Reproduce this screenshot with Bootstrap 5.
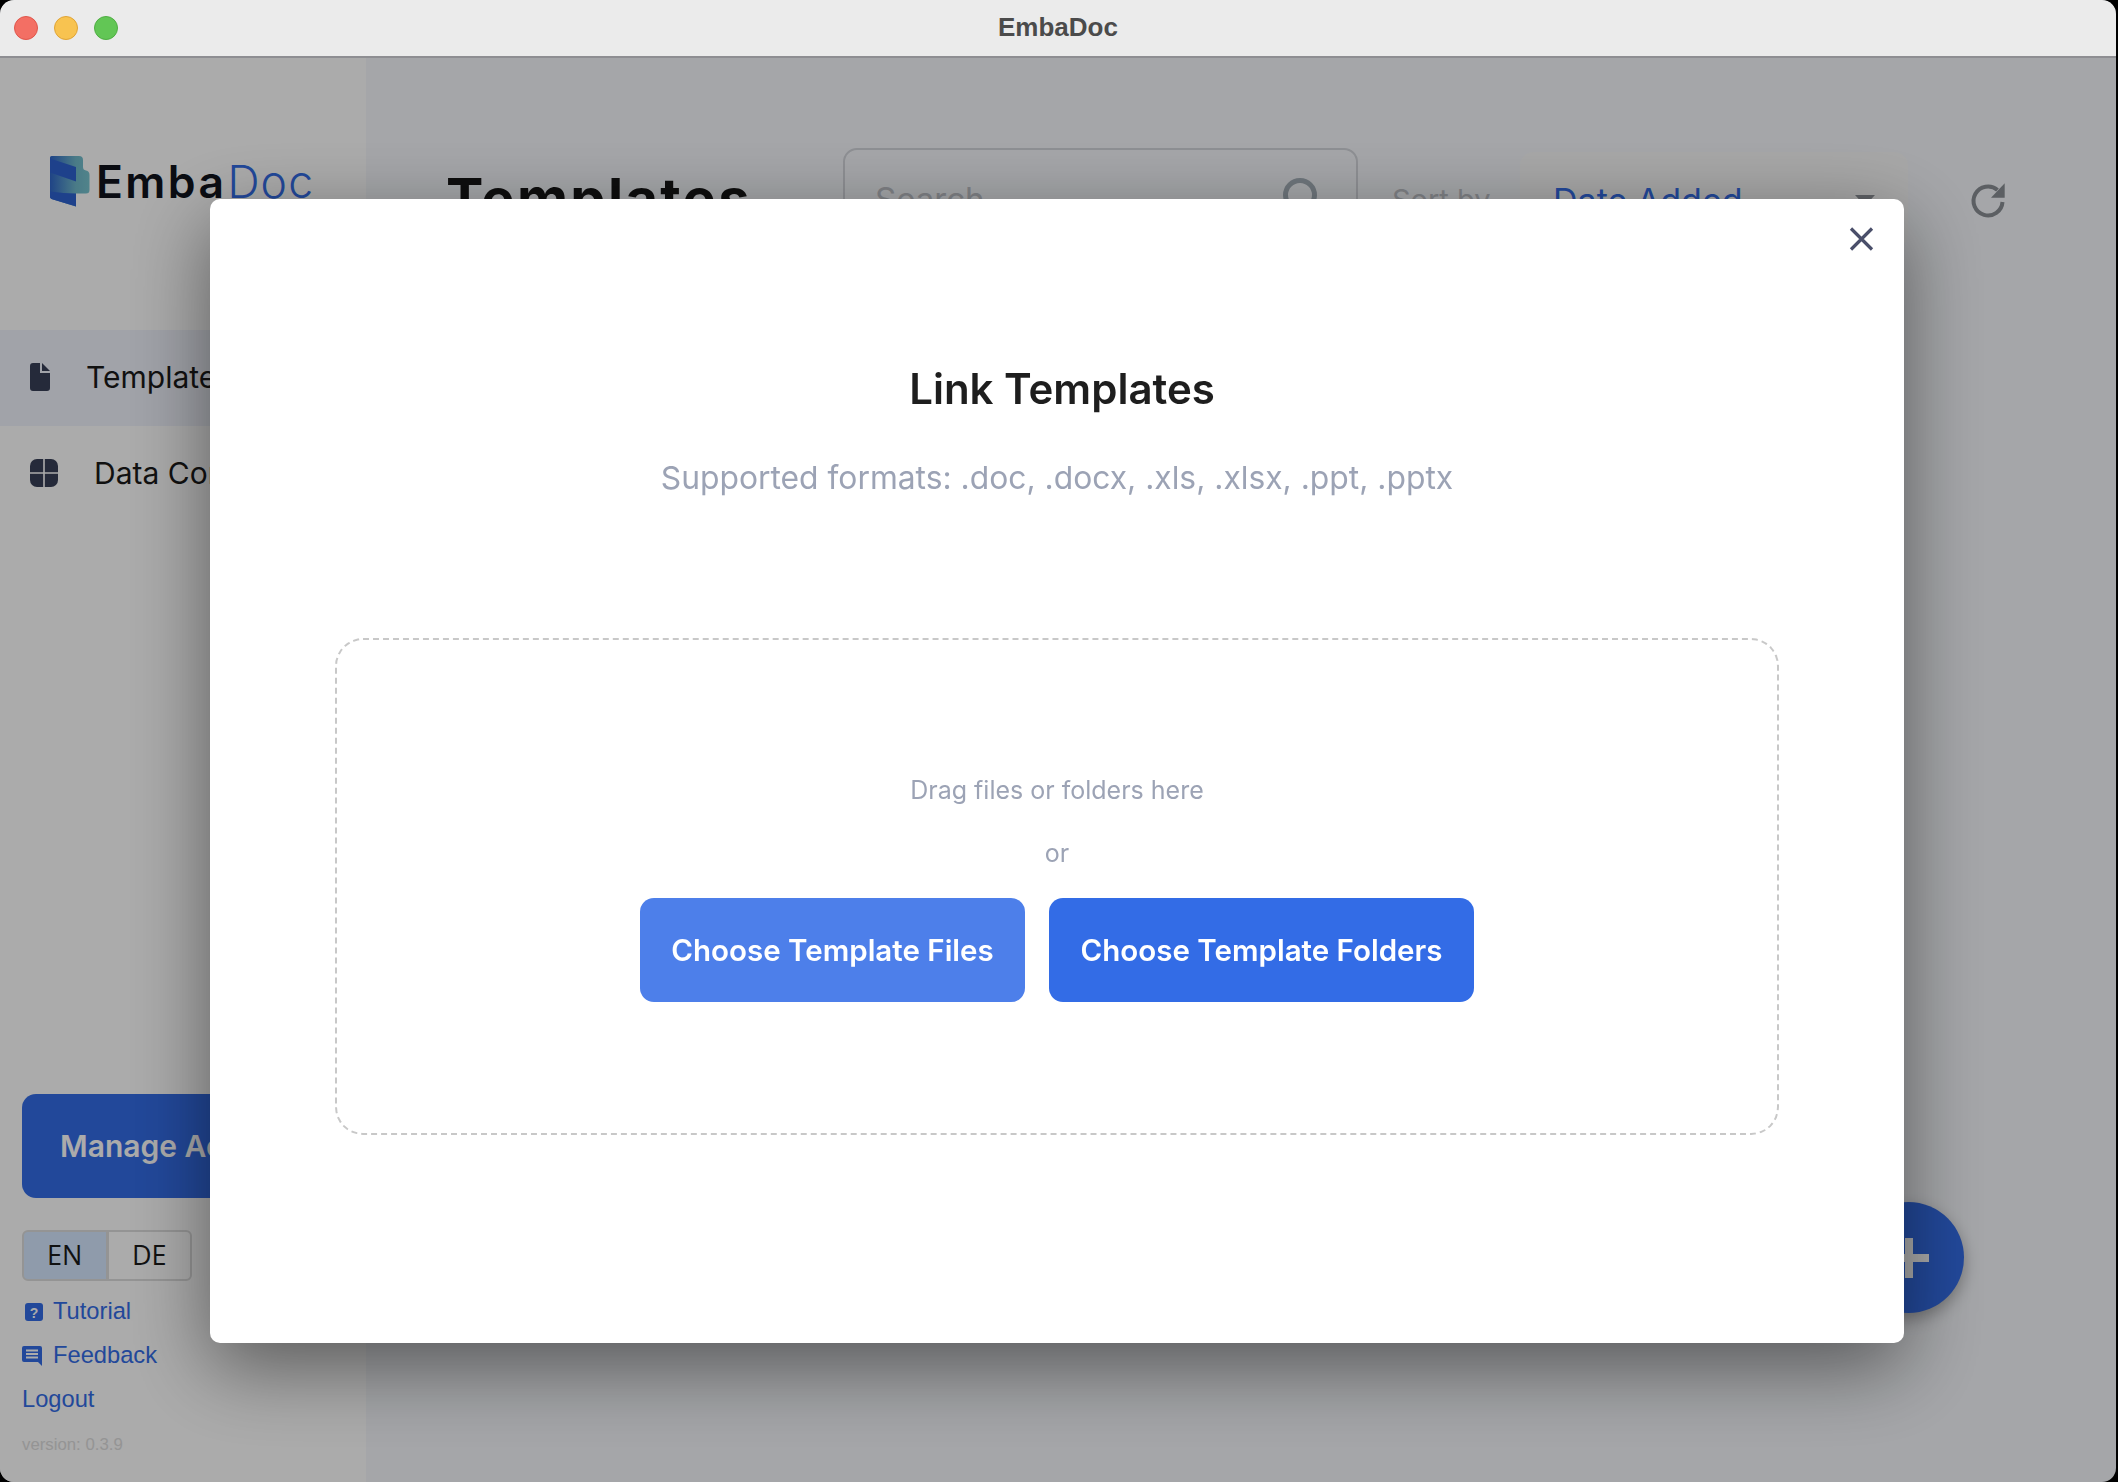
<!DOCTYPE html>
<html lang="en">
<head>
  <meta charset="UTF-8" />
  <meta name="viewport" content="width=device-width, initial-scale=1.0"/>
  <title>EmbaDoc</title>
  <link href="https://cdn.jsdelivr.net/npm/bootstrap@5.3.2/dist/css/bootstrap.min.css" rel="stylesheet" />
  <style>
    html, body { height: 100%; }
    body {
      background: #000;
      font-family: Inter, "Liberation Sans", sans-serif;
      overflow: hidden;
    }

    /* window frame */
    .app-window {
      width: 2116px;
      height: 1482px;
      border-radius: 14px;
      overflow: hidden;
      background: #f6f8fc;
    }
    .title-bar {
      height: 58px;
      background: #ebebeb;
      border-bottom: 2px solid #8e8e92;
      position: relative;
      z-index: 1060;
      border-radius: 14px 14px 0 0;
    }
    .traffic { width: 24px; height: 24px; border-radius: 50%; }
    .traffic-red { background: #f36f64; border: 1px solid #e0564b; }
    .traffic-yellow { background: #f8c350; border: 1px solid #e0a436; }
    .traffic-green { background: #62c655; border: 1px solid #4fae43; }
    .traffic-set { gap: 16px; padding-left: 14px; }
    .title-text {
      font-family: "Liberation Sans", sans-serif;
      font-weight: 700;
      font-size: 26px;
      color: #4b4b4b;
      left: 0; right: 0; top: 11px;
      line-height: 32px;
    }

    /* sidebar */
    .side-col { width: 366px; background: #fff; height: 1424px; flex: none; }
    .logo-block { height: 272px; padding: 98px 0 0 50px; }
    .logo-name { font-size: 44.5px; line-height: 51px; margin: 1px 0 0 6px; letter-spacing: 2.4px; color: #10131c; font-weight: 600; }
    .logo-name span { color: #336ce6; font-weight: 300; margin-left: 1px; letter-spacing: 1.2px; }
    .nav-row { height: 96px; padding: 0 0 2px 30px; font-size: 30px; color: #1a1a1a; white-space: nowrap; }
    .nav-row.active { background: #f0f3fc; }
    .nav-label { margin-left: 36px; }
    .nav-label-wide { margin-left: 36px; }
    .manage-btn {
      width: 322px; height: 104px; margin-left: 22px; border-radius: 14px;
      background: #336ce6; color: #fff; font-weight: 600; font-size: 30px;
      text-align: left; padding-left: 38px; border: 0; white-space: nowrap;
    }
    .lang-group { margin: 32px 0 9px 22px; width: 170px; height: 51px; }
    .lang-group .btn {
      width: 85px; padding: 0; border: 2px solid #ddd; color: #1a1a1a;
      font-family: "Open Sans", sans-serif; font-size: 27px; background: #fff;
    }
    .lang-group .btn.active { background: #d5e8ff; color: #1a1a1a; border-color: #ddd; }
    .side-link {
      height: 44px; padding-left: 22px; gap: 9px;
      font-family: "Liberation Sans", sans-serif; font-size: 23.7px;
      color: #336ce6; text-decoration: none;
    }
    .side-link svg { flex: none; }
    .help-icon { margin-left: 3px; margin-right: 1px; }
    .version-text {
      height: 46px; line-height: 46px; padding-left: 22px; margin-bottom: 14px;
      font-family: "Liberation Sans", sans-serif; font-size: 16.8px; color: #ddd;
    }

    /* main toolbar */
    .main-col { padding: 90px 0 0 80px; position: relative; }
    .tool-row { height: 104px; }
    .page-heading { width: 397px; margin: 0; font-size: 56px; font-weight: 700; color: #151515; letter-spacing: 2.3px; flex: none; }
    .search-box {
      width: 515px; height: 104px; border: 2px solid #d4d6dc; border-radius: 14px;
      padding: 0 28px 0 30px; flex: none;
    }
    .search-box .form-control { background: transparent; padding: 0; font-size: 33px; box-shadow: none; }
    .search-box .form-control::placeholder { color: #bfc2c8; }
    .sort-label { width: 128px; margin-left: 34px; padding: 0; font-size: 29px; color: #bfc2c8; flex: none; white-space: nowrap; }
    .sort-btn {
      width: 388px; height: 96px; background: #f9f9f9; border: 0; border-radius: 14px;
      color: #336ce6; font-size: 34px; padding: 0 33px; flex: none;
    }
    .sort-btn::after { border-top: 11px solid #8e9298; border-left: 10px solid transparent; border-right: 10px solid transparent; border-bottom: 0; margin: 0; }
    .refresh-icon { margin: 2px 0 0 60px; flex: none; }
    .fab-add {
      position: absolute; right: 152px; top: 1144px;
      width: 111px; height: 111px; border-radius: 50%; border: 0; padding: 0;
      background: #336ce6;
      box-shadow: 0 6px 16px rgba(0,0,0,.3);
    }

    /* modal */
    .modal-backdrop.show { opacity: .33; }
    .link-dialog { margin: 199px 0 0 210px; width: 1694px; max-width: 1694px; }
    .link-content {
      height: 1144px; border: 0; border-radius: 10px; padding: 0 125px;
      box-shadow: 0 24px 80px rgba(0,0,0,.48);
    }
    .close-row { height: 76px; margin-right: -95px; padding-top: 28px; }
    .close-btn { background: none; border: 0; padding: 0; line-height: 0; height: 24px; }
    .link-title { margin: 86px 0 0; padding-left: 10px; font-size: 42px; line-height: 56px; font-weight: 600; color: #1e1e1e; text-align: center; }
    .link-sub { margin: 38px 0 0; font-size: 31.8px; line-height: 46px; color: #9ca3b5; text-align: center; }
    .drop-zone {
      height: 497px; margin-top: 137px;
      border: 2px dashed #c8c8c8; border-radius: 28px;
      padding-top: 130px; text-align: center; color: #9ca3b5;
    }
    .drop-line { font-size: 25px; line-height: 40px; }
    .drop-or { font-size: 25px; line-height: 40px; margin: 23px 0 25px; }
    .choose-btn {
      height: 104px; border: 0; border-radius: 14px; color: #fff;
      font-size: 29.5px; font-weight: 600; padding: 0;
    }
    .choose-files { width: 385px; background: #4d7fea; }
    .choose-folders { width: 425px; background: #336ce6; }
    .choose-btn:hover { color: #fff; }
  </style>
</head>
<body>

  <div class="app-window position-relative">

    <!-- Title bar -->
    <div class="title-bar d-flex align-items-center">
      <div class="traffic-set d-flex">
        <span class="traffic traffic-red"></span>
        <span class="traffic traffic-yellow"></span>
        <span class="traffic traffic-green"></span>
      </div>
      <div class="title-text position-absolute text-center">EmbaDoc</div>
    </div>

    <div class="d-flex">

      <!-- Sidebar -->
      <aside class="side-col d-flex flex-column">
        <div class="logo-block d-flex align-items-start">
          <svg width="40" height="51" viewBox="0 0 40 51">
            <defs>
              <linearGradient id="logoGrad" x1="0" y1="0" x2="1" y2="0">
                <stop offset="0" stop-color="#2f66c8"/>
                <stop offset=".65" stop-color="#6fb8c9"/>
                <stop offset="1" stop-color="#79c4cf"/>
              </linearGradient>
            </defs>
            <path fill="url(#logoGrad)" d="M1.5 0H29Q33 0 33 4V11Q33 14 36 14.5Q39.5 15 39.5 19V34Q39.5 37.5 36 37.5H26V50.5L1.5 43Q0 42 0 41V1.5Q0 0 1.5 0Z"/>
            <path fill="#2e62d0" d="M0 2.5L26 11V25.5L0 16.5Z"/>
            <path fill="#2e62d0" d="M0 35.5Q14 37.5 26 37.5V50.5L1.5 43Q0 42 0 41Z"/>
          </svg>
          <div class="logo-name">Emba<span>Doc</span></div>
        </div>

        <div class="nav-row active d-flex align-items-center">
          <svg width="20" height="28" viewBox="0 0 20 28">
            <path fill="#383f57" d="M3 0H10V10H20V25Q20 28 17 28H3Q0 28 0 25V3Q0 0 3 0Z"/>
            <path fill="#383f57" d="M12 0L20 8H12Z"/>
          </svg>
          <span class="nav-label">Templates</span>
        </div>
        <div class="nav-row d-flex align-items-center">
          <svg width="28" height="28" viewBox="0 0 28 28">
            <rect width="28" height="28" rx="7" fill="#383f57"/>
            <path d="M14 0V28M0 14H28" stroke="#fff" stroke-width="1.6"/>
          </svg>
          <span class="nav-label-wide">Data Connections</span>
        </div>

        <div class="mt-auto">
          <button class="manage-btn btn">Manage Account</button>
          <div class="lang-group btn-group d-flex">
            <button class="btn active">EN</button>
            <button class="btn">DE</button>
          </div>
          <a href="#" class="side-link d-flex align-items-center">
            <svg class="help-icon" width="18" height="18" viewBox="0 0 18 18">
              <rect width="18" height="18" rx="3" fill="#336ce6"/>
              <text x="9" y="14.5" font-size="14" font-weight="700" text-anchor="middle" fill="#fff" font-family="Liberation Sans, sans-serif">?</text>
            </svg>
            Tutorial
          </a>
          <a href="#" class="side-link d-flex align-items-center">
            <svg width="22" height="22" viewBox="0 0 22 22">
              <path fill="#336ce6" d="M2 1H18Q20 1 20 3V21L16 17H2Q0 17 0 15V3Q0 1 2 1Z"/>
              <path d="M4 5.5H16M4 9H16M4 12.5H16" stroke="#fff" stroke-width="1.8"/>
            </svg>
            Feedback
          </a>
          <a href="#" class="side-link d-flex align-items-center">Logout</a>
          <div class="version-text">version: 0.3.9</div>
        </div>
      </aside>

      <!-- Main -->
      <main class="main-col flex-grow-1">
        <div class="tool-row d-flex align-items-center">
          <h1 class="page-heading">Templates</h1>
          <div class="search-box d-flex align-items-center">
            <input class="form-control border-0" type="text" placeholder="Search" />
            <svg width="46" height="46" viewBox="0 0 46 46" fill="none" stroke="#a5b0b9" stroke-width="5" class="flex-shrink-0">
              <circle cx="18" cy="18" r="14.5"/>
              <path d="M29 29L42 42"/>
            </svg>
          </div>
          <label class="sort-label">Sort by</label>
          <button class="sort-btn btn dropdown-toggle d-flex align-items-center justify-content-between">Date Added</button>
          <svg class="refresh-icon" width="40" height="40" viewBox="0 0 40 40" fill="none">
            <path d="M29.5 9A14.5 14.5 0 1 0 34.5 21" stroke="#898e94" stroke-width="4"/>
            <path d="M23 16.7H36.7V2.3Z" fill="#898e94"/>
          </svg>
        </div>
        <button class="fab-add d-flex align-items-center justify-content-center" aria-label="Add">
          <svg width="40" height="40" viewBox="0 0 40 40"><path d="M20 0V40M0 20H40" stroke="#fff" stroke-width="8"/></svg>
        </button>
      </main>
    </div>
  </div>

  <div class="modal-backdrop show"></div>

  <!-- Link Templates modal -->
  <div class="modal d-block" tabindex="-1">
    <div class="modal-dialog link-dialog">
      <div class="modal-content link-content">
        <div class="close-row d-flex justify-content-end">
          <button class="close-btn" aria-label="Close">
            <svg width="25" height="24" viewBox="0 0 25 24">
              <path d="M2 1.5L23 22.5M23 1.5L2 22.5" stroke="#4a4f6a" stroke-width="3.2"/>
            </svg>
          </button>
        </div>
        <h2 class="link-title">Link Templates</h2>
        <p class="link-sub">Supported formats: .doc, .docx, .xls, .xlsx, .ppt, .pptx</p>
        <div class="drop-zone">
          <div class="drop-line">Drag files or folders here</div>
          <div class="drop-or">or</div>
          <div class="d-flex justify-content-center gap-4">
            <button class="choose-btn choose-files btn">Choose Template Files</button>
            <button class="choose-btn choose-folders btn">Choose Template Folders</button>
          </div>
        </div>
      </div>
    </div>
  </div>

  <script src="https://cdn.jsdelivr.net/npm/bootstrap@5.3.2/dist/js/bootstrap.bundle.min.js"></script>
</body>
</html>
